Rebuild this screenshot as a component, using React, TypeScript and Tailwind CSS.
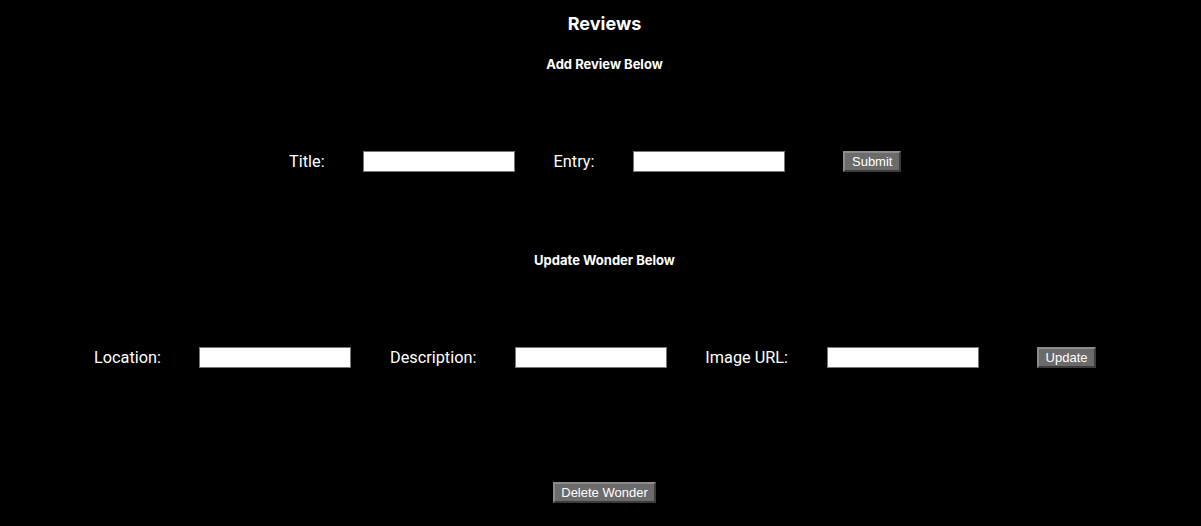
import React from "react";

const labelCls = "text-[16.3px] leading-[20px] text-white font-['Roboto',Arial,sans-serif]";
const inputCls = "h-[21px] w-[152px] border border-[#767676] bg-white";
const btnCls =
  "h-[21px] border-2 border-[#8c8c8c] border-r-[#3c3c3c] border-b-[#3c3c3c] bg-[#6b6b6b] px-[6.5px] text-[13px] leading-[14px] text-white [font-family:'Liberation_Sans',Arial,sans-serif]";

function Field({ label }: { label: string }) {
  return (
    <>
      <label className={labelCls}>{label}</label>
      <input type="text" className={inputCls} />
    </>
  );
}

export default function App() {
  return (
    <div className="flex min-h-[526px] w-full flex-col items-center bg-black pl-[8px] font-['Inter',sans-serif] text-white">
      <h2 className="mt-[13px] text-[18px] font-bold leading-[22px]">Reviews</h2>
      <h4 className="mt-[21px] text-[13px] font-bold leading-[16px]">Add Review Below</h4>

      {/* review form */}
      <form className="mt-[79px] flex items-center justify-center gap-[38.5px] pr-[19px]">
        <Field label="Title:" />
        <Field label="Entry:" />
        <button type="button" className={`${btnCls} ml-[20px]`}>
          Submit
        </button>
      </form>

      <h4 className="mt-[80px] text-[13px] font-bold leading-[16px]">Update Wonder Below</h4>

      {/* update form */}
      <form className="mt-[79px] flex items-center justify-center gap-[38.5px] pr-[19px]">
        <Field label="Location:" />
        <Field label="Description:" />
        <Field label="Image URL:" />
        <button type="button" className={`${btnCls} ml-[20px]`}>
          Update
        </button>
      </form>

      <button type="button" className={`${btnCls} mt-[114px]`}>
        Delete Wonder
      </button>
    </div>
  );
}
